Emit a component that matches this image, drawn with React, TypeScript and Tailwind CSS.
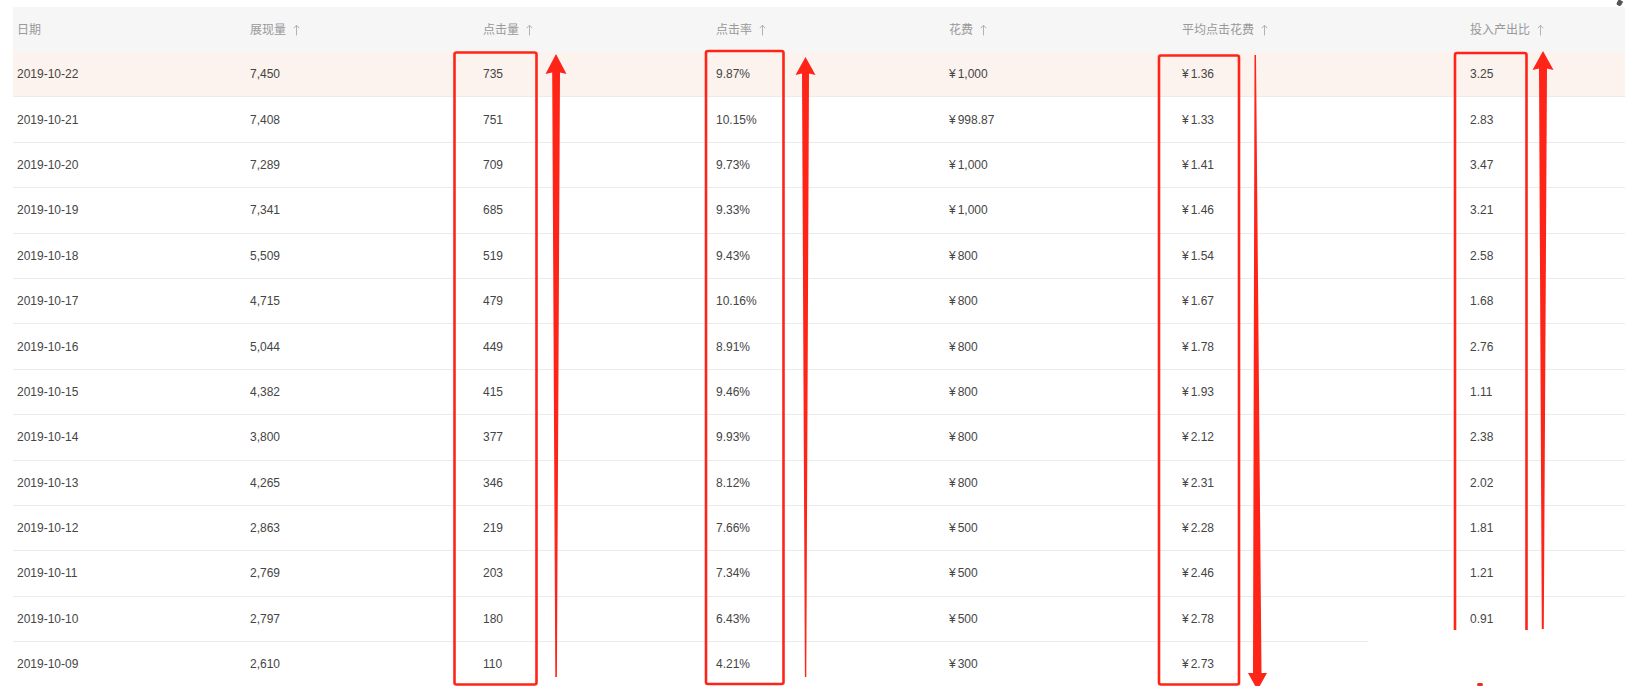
import React from "react";

const headers = ["日期", "展现量", "点击量", "点击率", "花费", "平均点击花费", "投入产出比"];

const rows: string[][] = [
  ["2019-10-22", "7,450", "735", "9.87%", "¥1,000", "¥1.36", "3.25"],
  ["2019-10-21", "7,408", "751", "10.15%", "¥998.87", "¥1.33", "2.83"],
  ["2019-10-20", "7,289", "709", "9.73%", "¥1,000", "¥1.41", "3.47"],
  ["2019-10-19", "7,341", "685", "9.33%", "¥1,000", "¥1.46", "3.21"],
  ["2019-10-18", "5,509", "519", "9.43%", "¥800", "¥1.54", "2.58"],
  ["2019-10-17", "4,715", "479", "10.16%", "¥800", "¥1.67", "1.68"],
  ["2019-10-16", "5,044", "449", "8.91%", "¥800", "¥1.78", "2.76"],
  ["2019-10-15", "4,382", "415", "9.46%", "¥800", "¥1.93", "1.11"],
  ["2019-10-14", "3,800", "377", "9.93%", "¥800", "¥2.12", "2.38"],
  ["2019-10-13", "4,265", "346", "8.12%", "¥800", "¥2.31", "2.02"],
  ["2019-10-12", "2,863", "219", "7.66%", "¥500", "¥2.28", "1.81"],
  ["2019-10-11", "2,769", "203", "7.34%", "¥500", "¥2.46", "1.21"],
  ["2019-10-10", "2,797", "180", "6.43%", "¥500", "¥2.78", "0.91"],
  ["2019-10-09", "2,610", "110", "4.21%", "¥300", "¥2.73", ""],
];

const RED = "#ff2418";

function SortArrow() {
  return (
    <svg className="ml-[7px]" width="7" height="12" viewBox="0 0 7 12" fill="none" stroke="#b3b3b3" strokeWidth="1">
      <path d="M3.5 1.2 V11.5" />
      <path d="M0.8 4.2 L3.5 1.2 L6.2 4.2" />
    </svg>
  );
}

function Cell({ v }: { v: string }) {
  if (v.startsWith("¥")) {
    return (
      <div className="pl-[4px]">
        <span className="mr-[2px]">¥</span>
        {v.slice(1)}
      </div>
    );
  }
  return <div className="pl-[4px]">{v}</div>;
}

export default function App() {
  return (
    <div className="relative w-[1625px] h-[686px] overflow-hidden bg-white font-['Liberation_Sans','Noto_Sans_CJK_SC',sans-serif] text-[12px]">
      <div className="pt-[7px] pl-[13px]">
        <div className="grid grid-cols-[233px_233px_233px_233px_233px_288px_1fr] h-[45px] items-center bg-[#f6f6f6] text-[#999999]">
          {headers.map((h, i) => (
            <div key={h} className="pl-[4px] flex items-center">
              <span>{h}</span>
              {i > 0 && <SortArrow />}
            </div>
          ))}
        </div>
        {rows.map((r, ri) => (
          <div
            key={r[0]}
            className={
              "grid grid-cols-[233px_233px_233px_233px_233px_288px_1fr] h-[45.4px] items-center border-b border-[#ebebeb] text-[#454545] " +
              (ri === 0 ? "bg-[#fcf3ee]" : "bg-white")
            }
          >
            {r.map((c, ci) => (
              <Cell key={ci} v={c} />
            ))}
          </div>
        ))}
      </div>

      <svg
        className="absolute left-0 top-0 pointer-events-none"
        width="1625"
        height="686"
        viewBox="0 0 1625 686"
      >
        <g fill="none" stroke={RED} strokeWidth="2.6">
          <rect x="454.5" y="52.5" width="82" height="632" rx="2" />
          <rect x="706" y="51" width="77.5" height="633" rx="2" />
          <rect x="1159" y="55.5" width="80" height="629" rx="2" />
          <rect x="1455" y="53" width="71.5" height="620" rx="2" />
        </g>
        <g fill={RED}>
          <polygon points="556,54 566.5,74 560,72.5 556.9,677 555.3,677 552.2,72.5 545.5,74" />
          <polygon points="805.5,57 815.5,75 809,73.5 806.3,677 804.9,677 802,73.5 795.5,75" />
          <polygon points="1254.5,55 1256,55 1261.5,673 1267,673 1257.5,690 1248,673 1253,673" />
          <polygon points="1543,51 1553.5,70 1547,68.5 1543.8,629 1541.8,629 1539,68.5 1532.5,70" />
        </g>
      </svg>

      <div className="absolute left-[1368px] top-[630px] w-[257px] h-[56px] bg-white" />
      <div className="absolute left-[1477px] top-[683px] w-[6px] h-[3px] bg-[#e8321f] rounded-sm" />
      <div className="absolute left-[1617px] top-0 w-[5px] h-[6px] bg-[#555] rounded-b-full rotate-[30deg]" />
    </div>
  );
}
